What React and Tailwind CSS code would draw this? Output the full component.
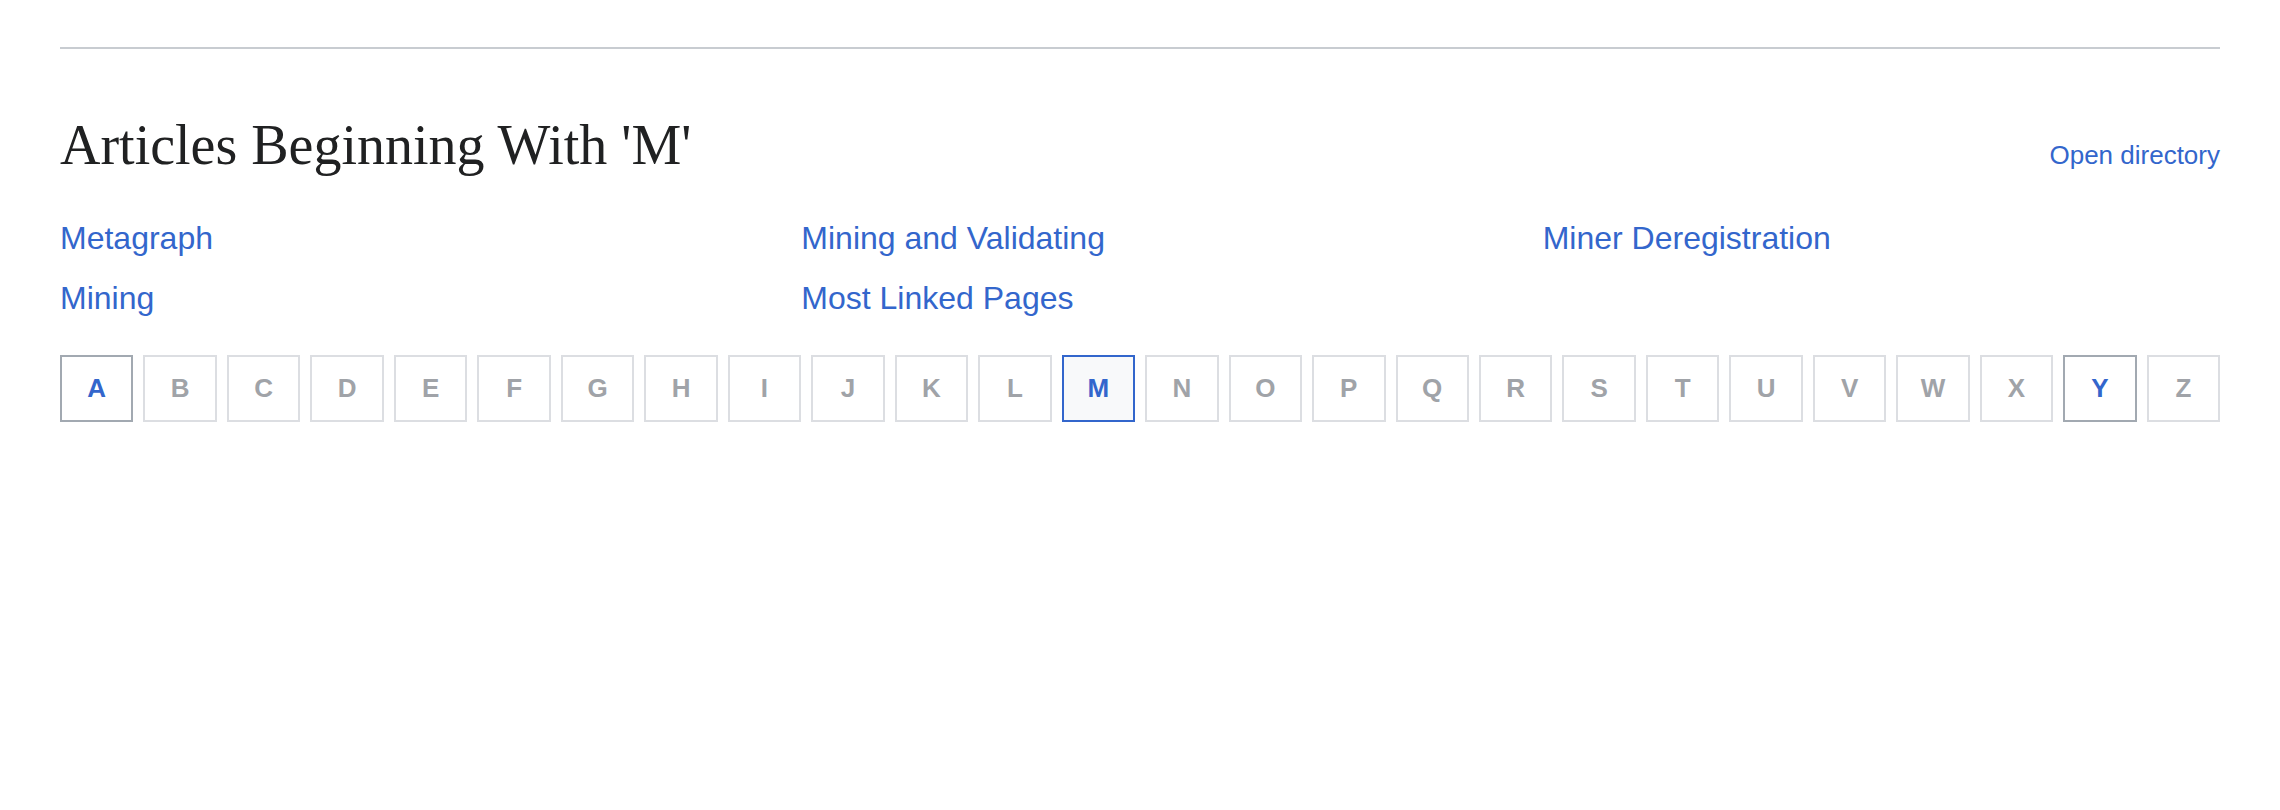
const articles = [
  "Metagraph",
  "Mining and Validating",
  "Miner Deregistration",
  "Mining",
  "Most Linked Pages",
];

const letters = "ABCDEFGHIJKLMNOPQRSTUVWXYZ".split("");
const current = "M";
// letters that have at least one article outside the current page
const linked = ["A", "Y"];

const LetterBox = ({ letter }) => {
  const active = letter === current;
  const hasLink = linked.includes(letter);
  let cls = "border-[#dcdee2] text-[#a0a3a8] bg-white";
  if (active) cls = "border-[#3366cc] text-[#3366cc] bg-[#f8f9fa]";
  else if (hasLink) cls = "border-[#a2a9b1] text-[#3366cc] bg-white";
  return (
    <a
      href="#"
      className={`flex-1 h-[67px] border-2 flex items-center justify-center text-[26px] font-bold ${cls}`}
    >
      {letter}
    </a>
  );
};

export default function App() {
  return (
    <div className="min-h-screen bg-white px-[60px] pt-[47px] font-['Liberation_Sans',Arial,sans-serif]">
      <div className="border-t-2 border-[#c8ccd1]" />

      {/* title row */}
      <div className="mt-[68px] flex items-baseline justify-between">
        <h1 className="text-[56px] leading-none text-[#202122] font-['Liberation_Serif','Times_New_Roman',serif]">
          Articles Beginning With 'M'
        </h1>
        <a href="#" className="text-[26px] text-[#3366cc]">
          Open directory
        </a>
      </div>

      {/* article list */}
      <div className="mt-[39px] grid grid-cols-3 gap-x-[64px] gap-y-[12px]">
        {articles.map((title) => (
          <a
            key={title}
            href="#"
            className="text-[32px] leading-[48px] text-[#3366cc] w-fit"
          >
            {title}
          </a>
        ))}
      </div>

      {/* alphabet nav */}
      <nav className="mt-[33px] flex gap-[10px]">
        {letters.map((l) => (
          <LetterBox key={l} letter={l} />
        ))}
      </nav>
    </div>
  );
}
